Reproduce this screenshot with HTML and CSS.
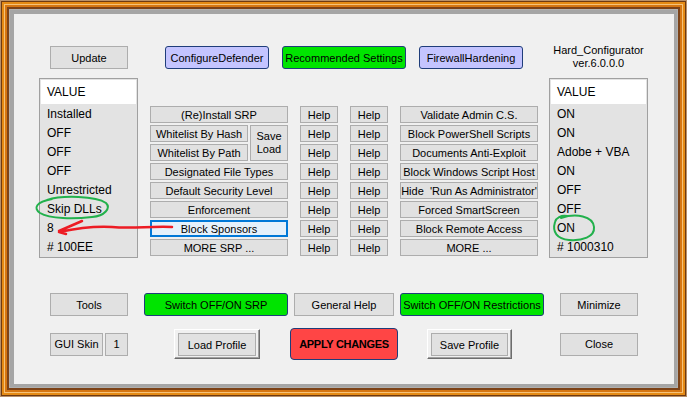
FILE: index.html
```html
<!DOCTYPE html>
<html lang="en">
<head>
    <meta charset="UTF-8">
    <title>Hard_Configurator</title>
    <link rel="stylesheet" href="styles.css">
</head>
<body>
    <div class="frame">
        <div class="window">
            <div class="row top-row">
                <button class="btn update">Update</button>
                <button class="btn blue defender">ConfigureDefender</button>
                <button class="btn green recommended">Recommended Settings</button>
                <button class="btn blue firewall">FirewallHardening</button>
                <div class="title">Hard_Configurator<br>ver.6.0.0.0</div>
            </div>

            <div class="main">
                <div class="list list-left">
                    <div class="list-head">VALUE</div>
                    <div class="list-item">Installed</div>
                    <div class="list-item">OFF</div>
                    <div class="list-item">OFF</div>
                    <div class="list-item">OFF</div>
                    <div class="list-item">Unrestricted</div>
                    <div class="list-item">Skip DLLs</div>
                    <div class="list-item">8</div>
                    <div class="list-item"># 100EE</div>
                </div>

                <div class="options">
                    <button class="btn">(Re)Install SRP</button>
                    <button class="btn">Help</button>
                    <button class="btn">Help</button>
                    <button class="btn">Validate Admin C.S.</button>

                    <div class="pair">
                        <button class="btn">Whitelist By Hash</button>
                        <button class="btn save-load">Save<br>Load</button>
                        <button class="btn">Whitelist By Path</button>
                    </div>
                    <button class="btn">Help</button>
                    <button class="btn">Help</button>
                    <button class="btn">Block PowerShell Scripts</button>
                    <button class="btn">Help</button>
                    <button class="btn">Help</button>
                    <button class="btn">Documents Anti-Exploit</button>

                    <button class="btn">Designated File Types</button>
                    <button class="btn">Help</button>
                    <button class="btn">Help</button>
                    <button class="btn">Block Windows Script Host</button>

                    <button class="btn">Default Security Level</button>
                    <button class="btn">Help</button>
                    <button class="btn">Help</button>
                    <button class="btn keep-space">Hide  'Run As Administrator'</button>

                    <button class="btn">Enforcement</button>
                    <button class="btn">Help</button>
                    <button class="btn">Help</button>
                    <button class="btn">Forced SmartScreen</button>

                    <button class="btn focused">Block Sponsors</button>
                    <button class="btn">Help</button>
                    <button class="btn">Help</button>
                    <button class="btn">Block Remote Access</button>

                    <button class="btn">MORE SRP ...</button>
                    <button class="btn">Help</button>
                    <button class="btn">Help</button>
                    <button class="btn">MORE ...</button>
                </div>

                <div class="list list-right">
                    <div class="list-head">VALUE</div>
                    <div class="list-item">ON</div>
                    <div class="list-item">ON</div>
                    <div class="list-item">Adobe + VBA</div>
                    <div class="list-item">ON</div>
                    <div class="list-item">OFF</div>
                    <div class="list-item">OFF</div>
                    <div class="list-item">ON</div>
                    <div class="list-item"># 1000310</div>
                </div>
            </div>

            <div class="row bottom-row">
                <button class="btn tools">Tools</button>
                <button class="btn green switch-srp">Switch OFF/ON SRP</button>
                <button class="btn general-help">General Help</button>
                <button class="btn green switch-restr">Switch OFF/ON Restrictions</button>
                <button class="btn minimize">Minimize</button>
            </div>

            <div class="row action-row">
                <button class="btn skin">GUI Skin</button>
                <button class="btn skin-num">1</button>
                <div class="raised load-profile"><span class="btn">Load Profile</span></div>
                <button class="btn apply">APPLY CHANGES</button>
                <div class="raised save-profile"><span class="btn">Save Profile</span></div>
                <button class="btn close">Close</button>
            </div>
        </div>

        <!-- hand-drawn marks on the screenshot -->
        <svg class="marks" width="687" height="397" viewBox="0 0 687 397">
            <path d="M47 200 C62 195 96 196 106 203 C111 208 105 216 92 217 C74 219 50 219 40 213 C33 208 36 202 52 199"
                  fill="none" stroke="#22b14c" stroke-width="2" stroke-linecap="round"/>
            <path d="M172 227 C150 226 132 229 112 227 C96 226 78 228 59 232 M59 231 L82 221 M59 232 L66 234"
                  fill="none" stroke="#ed1c24" stroke-width="2.5" stroke-linecap="round"/>
            <path d="M561 218 C576 213 593 216 594 227 C595 237 582 241 569 240 C557 239 552 232 555 222 C556 218 561 215 567 216"
                  fill="none" stroke="#22b14c" stroke-width="2" stroke-linecap="round"/>
        </svg>
    </div>
</body>
</html>
```

FILE: styles.css
```css
* { margin: 0; padding: 0; box-sizing: border-box; }
body {
    font-family: "Liberation Sans", Arial, sans-serif;
    font-size: 11px;
    color: #000;
    background: #f0f0f0;
}

.frame {
    position: relative;
    width: 687px;
    height: 397px;
    padding: 10px;
    background: #d0d0d0;
    box-shadow:
        inset 0 0 0 1px #b8906a,
        inset 0 0 0 2px #6e3a12,
        inset 0 0 0 4px #e58a14,
        inset 0 0 0 5px #f5c27a,
        inset 0 0 0 7px #d67612,
        inset 0 0 0 9px #7c4218,
        inset 0 0 0 10px #b0b0b0;
}

.window {
    height: 100%;
    background: #f0f0f0;
    border: solid #a5a5a5;
    border-width: 4px 3px 3px 4px;
}

.row { display: flex; align-items: center; }

.btn {
    font: inherit;
    color: #000;
    height: 23px;
    background: #e1e1e1;
    border: 1px solid #adadad;
    display: flex;
    align-items: center;
    justify-content: center;
    white-space: nowrap;
}

.blue {
    background: #c4c4ff;
    border-color: #1f3d7a;
    border-radius: 3px;
}

.green {
    background: #00e400;
    border-color: #1f3d7a;
    border-radius: 3px;
}

/* top row */
.top-row { margin-top: 32px; height: 23px; align-items: flex-start; }
.update { margin-left: 36px; width: 78px; }
.defender { margin-left: 37px; width: 104px; }
.recommended { margin-left: 13px; width: 124px; }
.firewall { margin-left: 13px; width: 104px; }
.title {
    margin-left: 26px;
    margin-top: -2px;
    width: 99px;
    text-align: center;
    line-height: 13px;
}

/* lists and option buttons */
.main { display: flex; align-items: flex-start; margin-top: 9px; }

.list {
    width: 99px;
    height: 180px;
    border: 1px solid #a0a0a0;
    background: #e3e3e3;
    padding: 1px;
    font-size: 12px;
}
.list-left { margin-left: 25px; }
.list-right { margin-left: 11px; }

.list-head {
    height: 24px;
    line-height: 24px;
    background: #fff;
    padding-left: 6px;
}

.list-item {
    height: 19px;
    line-height: 19px;
    padding: 1px 0 0 6px;
}

.options {
    margin-left: 12px;
    margin-top: 28px;
    display: grid;
    grid-template-columns: 138px 38px 38px 138px;
    grid-auto-rows: 17px;
    gap: 2px 12px;
}
.options .btn { height: 17px; }

.pair {
    grid-row: span 2;
    display: grid;
    grid-template-columns: 98px 38px;
    grid-template-rows: 17px 17px;
    gap: 2px;
}
.options .save-load {
    grid-row: span 2;
    height: 36px;
    line-height: 13px;
}
.keep-space { white-space: pre; }

.options .focused {
    border: 2px solid #0078d7;
    background: #e5f1fb;
}

/* bottom rows */
.bottom-row { margin-top: 35px; }
.tools { margin-left: 36px; width: 78px; }
.switch-srp { margin-left: 16px; width: 144px; }
.general-help { margin-left: 6px; width: 100px; }
.switch-restr { margin-left: 6px; width: 144px; }
.minimize { margin-left: 16px; width: 78px; }

.action-row { margin-top: 12px; height: 32px; }
.skin { margin-left: 36px; width: 53px; }
.skin-num { margin-left: 2px; width: 23px; }

.raised {
    height: 30px;
    padding: 3px 3px 2px 3px;
    background: #f0f0f0;
    border: 1px solid;
    border-color: #fff #6d6d6d #6d6d6d #fff;
    box-shadow: inset -1px -1px 0 #a0a0a0;
}
.raised .btn { height: 23px; }
.load-profile { margin-left: 46px; width: 86px; }
.save-profile { margin-left: 29px; width: 85px; }

.apply {
    margin-left: 30px;
    width: 108px;
    height: 32px;
    background: #ff4545;
    border-color: #1f3d7a;
    border-radius: 4px;
    font-weight: bold;
    letter-spacing: -0.3px;
}
.close { margin-left: 48px; width: 78px; }

.marks {
    position: absolute;
    top: 0;
    left: 0;
    pointer-events: none;
}
```
